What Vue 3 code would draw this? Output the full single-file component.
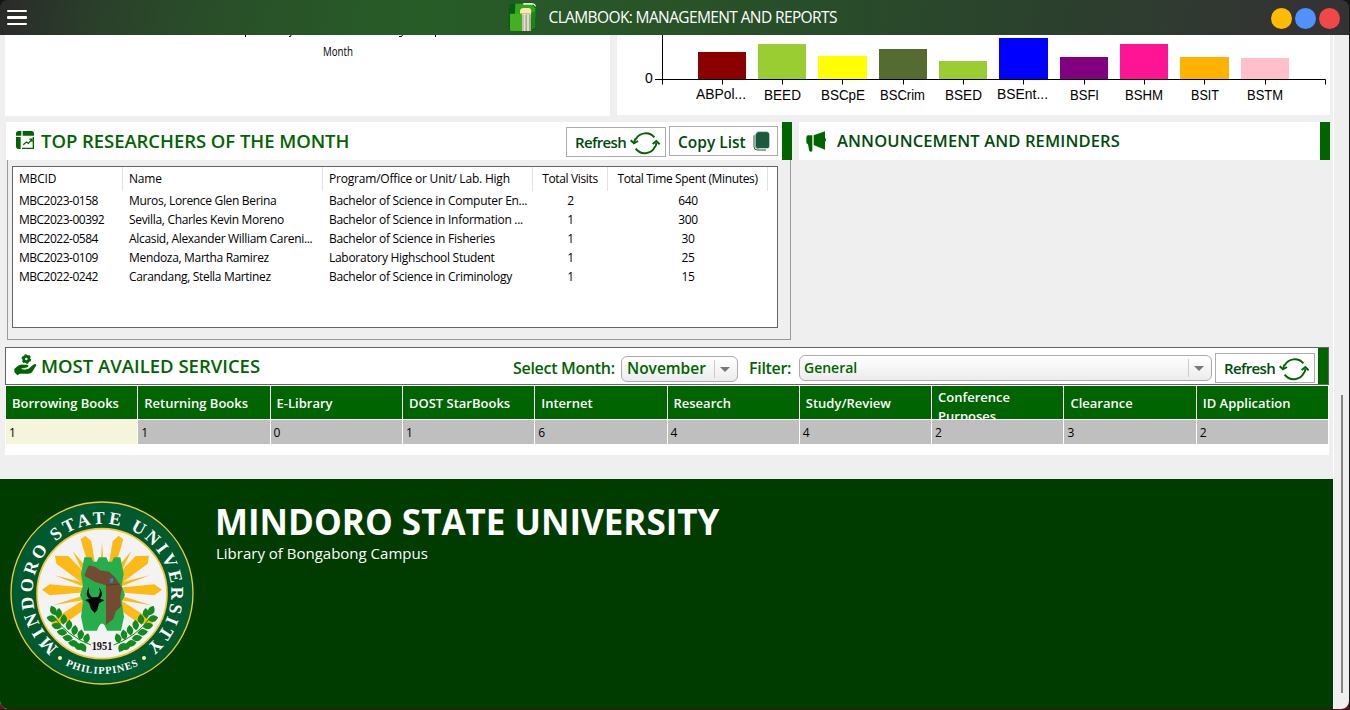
<script setup>
const bars = [
  { name: 'ABPol...', x: 698, w: 48, h: 27, fill: '#8b0000', lx: 696, lw: 50, ly: 99 },
  { name: 'BEED', x: 758, w: 48, h: 35, fill: '#9acd32', lx: 764, lw: 37, ly: 100 },
  { name: 'BSCpE', x: 818, w: 49, h: 23, fill: '#ffff00', lx: 821, lw: 44, ly: 100 },
  { name: 'BSCrim', x: 879, w: 48, h: 30, fill: '#556b2f', lx: 880, lw: 45, ly: 100 },
  { name: 'BSED', x: 939, w: 48, h: 18, fill: '#9acd32', lx: 945, lw: 37, ly: 100 },
  { name: 'BSEnt...', x: 999, w: 49, h: 41, fill: '#0000ff', lx: 997, lw: 51, ly: 99 },
  { name: 'BSFI', x: 1060, w: 48, h: 22, fill: '#800080', lx: 1070, lw: 29, ly: 100 },
  { name: 'BSHM', x: 1120, w: 48, h: 35, fill: '#ff1493', lx: 1125, lw: 38, ly: 100 },
  { name: 'BSIT', x: 1180, w: 49, h: 22, fill: '#ffb300', lx: 1191, lw: 28, ly: 100 },
  { name: 'BSTM', x: 1241, w: 48, h: 21, fill: '#ffc0cb', lx: 1247, lw: 36, ly: 100 },
]
const researchers = [
  ['MBC2023-0158', 'Muros, Lorence Glen Berina', 'Bachelor of Science in Computer En...', '2', '640'],
  ['MBC2023-00392', 'Sevilla, Charles Kevin Moreno', 'Bachelor of Science in Information ...', '1', '300'],
  ['MBC2022-0584', 'Alcasid, Alexander William Careni...', 'Bachelor of Science in Fisheries', '1', '30'],
  ['MBC2023-0109', 'Mendoza, Martha Ramirez', 'Laboratory Highschool Student', '1', '25'],
  ['MBC2022-0242', 'Carandang, Stella Martinez', 'Bachelor of Science in Criminology', '1', '15'],
]
const columns = ['MBCID', 'Name', 'Program/Office or Unit/ Lab. High', 'Total Visits', 'Total Time Spent (Minutes)']
const services = [
  ['Borrowing Books', 1], ['Returning Books', 1], ['E-Library', 0], ['DOST StarBooks', 1], ['Internet', 6],
  ['Research', 4], ['Study/Review', 4], ['Conference Purposes', 2], ['Clearance', 3], ['ID Application', 2],
]
const leaves = [
  [160, 362, 65], [155, 386, 15], [176, 370, 95], [170, 408, 10], [191, 388, 95],
  [186, 427, 8], [207, 405, 95], [203, 444, 8], [224, 421, 98], [220, 460, 8],
  [242, 434, 100], [236, 470, 20], [260, 445, 105], [249, 472, 60],
]
</script>

<template>
  <div class="window">
    <header class="titlebar">
      <div class="burger"><i></i><i></i><i></i></div>
      <div class="brand">
        <svg class="logo" viewBox="0 0 84 84">
          <path d="M8 2H76Q84 4 84 14V72Q84 80 76 80H10Q2 80 2 74V10Q2 3 8 2Z" fill="#0a5c14" />
          <path d="M22 2H70L82 16V44H20Z" fill="#31a81c" />
          <path d="M46 0H72Q84 2 84 12L76 5H46Z" fill="#e9f6e6" />
          <path d="M36 32V22Q38 15 47 15H64Q70 17 70 25V32Z" fill="#fbe7ad" />
          <path d="M6 34Q6 32 10 32H46V84H10Q6 84 6 78Z" fill="#43b022" />
          <path d="M42 84V34Q44 30 50 30H68V84Z" fill="#e8e8e8" />
          <path d="M45 36V84M56 34V84M64 34V84" stroke="#7b917e" stroke-width="2.500" />
          <path d="M41 32H66M52 36V84M68 34V84" stroke="#d8ad3c" stroke-width="2.500" />
          <path d="M70 26H82V72Q82 78 70 78Z" fill="#18861b" />
        </svg>
        <span class="brand-name">CLAMBOOK: MANAGEMENT AND REPORTS</span>
      </div>
      <div class="dots"><i class="min"></i><i class="max"></i><i class="close"></i></div>
    </header>

    <div class="body">
      <main class="content">
        <section class="charts">
          <div class="card visits">
            <svg width="605" height="81" viewBox="5 35 605 81">
              <path d="M245.500 35V37M289 36.500H290.500L291 35M399 36.500H401.500L402.500 35M435.500 35V37" stroke="#000" fill="none" />
              <text x="323" y="56" textLength="30" lengthAdjust="spacingAndGlyphs" class="axis-name">Month</text>
            </svg>
          </div>
          <div class="card programs">
            <svg width="713" height="80" viewBox="617 35 713 80">
              <rect v-for="b in bars" :key="b.name" :x="b.x" :y="79 - b.h" :width="b.w" :height="b.h" :fill="b.fill" />
              <path d="M662.500 35V84.500M655 79.500H1325.500V84.500" stroke="#000" fill="none" />
              <path v-for="b in bars" :key="b.name" :d="`M${b.x + 24.500} 79V84.500`" stroke="#000" />
              <text x="645" y="83" class="tick">0</text>
              <text v-for="b in bars" :key="b.name" :x="b.lx" :y="b.ly" :textLength="b.lw" lengthAdjust="spacingAndGlyphs" class="tick">{{ b.name }}</text>
            </svg>
          </div>
        </section>

        <section class="middle">
          <div class="researchers">
            <div class="head">
              <svg class="ico-board" width="18" height="18" viewBox="0 0 54 54">
                <path d="M8 0H16V14H0V8Q0 0 8 0ZM20 0H46Q54 0 54 8V14H20ZM0 18H14V54H8Q0 54 0 46Z" fill="#006400" />
                <path d="M52 18V52H18" fill="none" stroke="#006400" stroke-width="4" />
                <path d="M22 41L31 33L37 37L47 26M40 24.500H48V32" fill="none" stroke="#006400" stroke-width="4" />
              </svg>
              <h2 class="t-top">TOP RESEARCHERS OF THE MONTH</h2>
              <button class="btn refresh"><span>Refresh</span>
                <svg width="30" height="26" viewBox="0 0 90 78"><g fill="none" stroke="#006400" stroke-width="6">
                  <path d="M17 28A34 34 0 0 1 73 22M75 50A34 34 0 0 1 17 56M13 38Q13 31 17 26M79 38Q79 46 75 51" />
                  <path d="M2 31L12 40L24 33M68 42L79 33L89 43" /></g></svg>
              </button>
              <button class="btn copy"><span>Copy List</span>
                <svg width="17" height="20" viewBox="0 0 51 60">
                  <path d="M3 13V47Q3 57 13 57H39" fill="none" stroke="#1a5b3b" stroke-width="3" />
                  <path d="M7 10V42Q7 52 17 52" fill="none" stroke="#93ac9f" stroke-width="4" />
                  <rect x="9" y="3" width="40" height="49" rx="8" fill="#1a5b3b" />
                  <path d="M14 2H44" stroke="#8caa99" stroke-width="2" />
                </svg>
              </button>
              <i class="end"></i>
            </div>
            <div class="panel">
              <div class="list">
                <div class="row labels"><span v-for="c in columns" :key="c">{{ c }}</span></div>
                <div v-for="r in researchers" :key="r[0]" class="row entry"><span v-for="(c, i) in r" :key="i">{{ c }}</span></div>
              </div>
            </div>
          </div>
          <div class="announce">
            <div class="head">
              <svg class="ico-horn" width="21" height="21" viewBox="0 0 63 63">
                <path d="M7 13H19V61Q10 64 9 57L6 40Q1 39 1 33V20Q1 13 7 13ZM23 13L57 1V20Q63 26 57 33V56L23 42Z" fill="#006400" />
              </svg>
              <h2 class="t-ann">ANNOUNCEMENT AND REMINDERS</h2>
              <i class="end"></i>
            </div>
          </div>
        </section>

        <section class="services">
          <div class="bar">
            <svg class="ico-hand" width="23" height="22" viewBox="0 0 69 66">
              <circle cx="37" cy="15" r="8" fill="none" stroke="#006400" stroke-width="8" />
              <circle cx="37" cy="15" r="12.500" fill="none" stroke="#006400" stroke-width="4" stroke-dasharray="6.500 6.500" />
              <path d="M1 45Q16 30 28 32H39Q46 34 41 40L27 43Q33 46 43 44L57 33Q66 27 67 34L54 55Q50 59 43 59H17L10 64L1 54Z" fill="#006400" />
              <path d="M23 44Q34 48 44 42" fill="none" stroke="#fff" stroke-width="3" />
            </svg>
            <h2 class="t-srv">MOST AVAILED SERVICES</h2>
            <span class="lab month">Select Month:</span>
            <div class="select s-month"><span>November</span><b></b></div>
            <span class="lab filter">Filter:</span>
            <div class="select s-filter"><span>General</span><b></b></div>
            <button class="btn refresh"><span>Refresh</span>
              <svg width="30" height="26" viewBox="0 0 90 78"><g fill="none" stroke="#006400" stroke-width="6">
                <path d="M17 28A34 34 0 0 1 73 22M75 50A34 34 0 0 1 17 56M13 38Q13 31 17 26M79 38Q79 46 75 51" />
                <path d="M2 31L12 40L24 33M68 42L79 33L89 43" /></g></svg>
            </button>
            <i class="end"></i>
          </div>
          <div class="grid">
            <div v-for="s in services" :key="s[0]" class="th"><span>{{ s[0] }}</span></div>
            <div v-for="s in services" :key="s[0]" class="td">{{ s[1] }}</div>
          </div>
        </section>

        <footer class="footer">
          <svg class="seal" width="210" height="220" viewBox="0 0 630 660">
            <defs>
              <path id="arcTop" d="M 176 472 A 208 208 0 1 1 436 472" />
              <path id="arcBottom" d="M 150 495 A 243 243 0 0 0 462 495" />
            </defs>
            <circle cx="306" cy="309" r="273" fill="#005a2d" stroke="#f0ce28" stroke-width="4" />
            <circle cx="306" cy="311" r="195" fill="#f3f3f3" stroke="#f7c52c" stroke-width="5" />
            <g transform="translate(306 300)">
              <path d="M-64 -152L-50 -163L-32 -146L-21 -80L-42 -78ZM64 -152L50 -163L32 -146L21 -80L42 -78Z" fill="#fdb915" />
              <path d="M-141 -103L-101 -102L-55 -55V-18L-137 -79ZM141 -103L101 -102L55 -55V-18L137 -79Z" fill="#fdb915" />
              <path d="M-180 -1L-157 -17L-50 -7V7L-157 16ZM180 -1L157 -17L50 -7V7L157 16Z" fill="#fdb915" />
              <path d="M-55 30L-153 92L-149 110L-105 96L-55 60ZM55 30L153 92L149 110L105 96L55 60Z" fill="#fdb915" />
              <path d="M-4 -80L0 -145L4 -80ZM-88 -117L-50 -72L-62 -63ZM88 -117L50 -72L62 -63ZM-143 -44L-50 -21L-55 -10ZM143 -44L50 -21L55 -10ZM-148 46L-50 15L-52 30ZM148 46L50 15L52 30Z" fill="#fdb915" />
            </g>
            <path d="M253 202H274L280 215H290L297 202H319L325 215H336L342 202H361L371 252L365 287L375 315L365 335L372 380L363 422H321Q306 379 291 422H252L243 380L249 335L240 315L249 287L243 252Z" fill="#27ae4c" />
            <path d="M267 226L287 231L300 241L327 245L345 262L356 278L366 294L361 320L363 350L348 363L340 387L326 398L318 406V286L285 276L253 257L260 238Z" fill="#754a31" />
            <path d="M318 286L359 282" stroke="#4f3020" stroke-width="2" />
            <path d="M331 266L340 263L339 276L330 280Z" fill="#1297d4" />
            <path d="M267 291Q252 315 269 326L255 330L267 338L273 357L284 369L292 360L297 340L313 331L300 326Q313 310 297 292Q304 313 292 322H277Q264 315 267 291Z" fill="#000" />
            <g id="branch">
              <path d="M165 385Q205 440 273 465" fill="none" stroke="#128a1d" stroke-width="3" />
              <path v-for="(l, i) in leaves" :key="i" d="M-16 0Q0 -20 16 0Q0 20 -16 0Z" :transform="`translate(${l[0]} ${l[1]}) rotate(${l[2]})`" fill="#128a1d" />
            </g>
            <use href="#branch" transform="translate(614 0) scale(-1 1)" />
            <text x="275" y="480" textLength="62" lengthAdjust="spacingAndGlyphs" class="year">1951</text>
            <text class="ring"><textPath href="#arcTop" textLength="1022">MINDORO STATE UNIVERSITY</textPath></text>
            <text class="ring small"><textPath href="#arcBottom" startOffset="55" textLength="228">PHILIPPINES</textPath></text>
            <circle cx="180" cy="504" r="6" fill="#fff6a0" /><circle cx="432" cy="504" r="6" fill="#fff6a0" />
          </svg>
          <div class="school">
            <h1>MINDORO STATE UNIVERSITY</h1>
            <p>Library of Bongabong Campus</p>
          </div>
        </footer>
      </main>
      <aside class="scroll"><i></i></aside>
    </div>
    <div class="desk"></div>
  </div>
</template>

<style>
html, body { margin: 0; background: #1d1d1d; overflow: hidden; }
</style>

<style scoped>
* { box-sizing: border-box; }
.window { width: 1350px; height: 710px; display: flex; flex-direction: column; font-family: "Open Sans", "Noto Sans", sans-serif; color: #000; background: #151515; overflow: hidden; }
.titlebar { width: 1349px; height: 35px; flex: none; display: flex; align-items: center; justify-content: space-between; border-radius: 8px 8px 0 0; background: linear-gradient(100deg, #2a2a2a 0, #2a412a 8%, #295029 17%, #275c27 31%, #285527 47%, #284d29 60%, #2b422d 76%, #333 96%); }
.burger { width: 20px; margin-left: 7px; display: flex; flex-direction: column; gap: 4px; }
.burger i { height: 2.500px; background: #fff; border-radius: 1px; }
.brand { display: flex; align-items: center; margin-left: 48px; }
.logo { width: 28px; height: 28px; margin: -1px 13px 0 0; flex: none; }
.brand-name { width: 290px; font-size: 15.500px; line-height: 35px; color: #fff; white-space: nowrap; letter-spacing: -0.620px; }
.dots { display: flex; gap: 3px; margin-right: 9px; padding-top: 1px; }
.dots i { width: 21px; height: 21px; border-radius: 50%; }
.min { background: #fdbb05; } .max { background: #5090ff; } .close { background: #f04848; }
.body { height: 674px; display: flex; width: 1349px; background: #5a1622; }
.content { width: 1333px; display: flex; flex-direction: column; background: #efefef; border-radius: 0 0 0 8px; }
.scroll { width: 16px; background: #efefef; border-left: 1px solid #fff; display: flex; justify-content: center; border-radius: 0 0 8px 0; }
.scroll i { width: 2px; height: 298px; margin-top: 360px; background: #858585; }
.desk { height: 1px; background: #4c1018; }
.charts { display: flex; align-items: flex-start; gap: 7px; padding-left: 5px; height: 87px; }
.card { background: #fff; }
.visits { height: 81px; } .programs { height: 80px; }
.card svg { display: block; }
.axis-name { font-size: 12px; }
.tick { font: 14px "Liberation Sans", sans-serif; }
.middle { display: flex; gap: 7px; padding-left: 6px; height: 225px; }
.researchers { width: 786px; }
.announce { width: 531px; }
.head { height: 38px; display: flex; align-items: flex-start; background: #fff; }
.end { width: 10px; align-self: stretch; background: #006400; margin-left: auto; flex: none; }
h1, h2, p { margin: 0; white-space: nowrap; }
h2 { font-weight: 600; color: #006400; line-height: 38px; }
.ico-board { margin: 9px 0 0 10px; }
.t-top { font-size: 18.500px; width: 525px; margin-left: 7px; letter-spacing: -0.050px; }
.ico-horn { margin: 9px 0 0 7px; }
.t-ann { font-size: 16.500px; margin-left: 10px; color: #004b0b; letter-spacing: 0.130px; }
.btn { flex: none; height: 30px; border: 1px solid #adadad; background: #fff; display: flex; align-items: center; justify-content: flex-start; text-align: left; padding: 0; font-family: inherit; font-weight: 600; font-size: 15px; color: #004b0b; white-space: nowrap; }
.btn svg, .btn span { flex: none; }
.btn.refresh { width: 100px; margin-top: 5px; padding-left: 8px; }
.refresh span { width: 55px; letter-spacing: -0.650px; }
.refresh svg { margin-top: 2px; }
.btn.copy { width: 109px; margin: 4px 0 0 3px; padding-left: 8px; font-size: 15.500px; }
.copy span { width: 75px; padding-top: 1px; }
.panel { width: 784px; height: 180px; margin-left: 1px; border: 1px solid #999; border-top: 0; padding: 6px 0 0 4px; }
.list { width: 766px; height: 162px; border: 1px solid #646464; background: #fff; }
.row { display: grid; grid-template-columns: 110px 200px 210px 75px 160px; height: 19px; font-size: 12px; line-height: 19px; letter-spacing: -0.200px; white-space: nowrap; }
.row span { padding-left: 6px; overflow: hidden; }
.entry span:first-child { letter-spacing: -0.500px; }
.entry span:nth-child(2) { letter-spacing: -0.320px; }
.entry span:nth-child(3) { letter-spacing: -0.280px; }
.row span:nth-child(n+4) { text-align: center; padding-left: 0; letter-spacing: -0.350px; }
.labels { height: 24px; line-height: 24px; }
.labels span { border-right: 1px solid #e2e2e2; }
.services { margin-left: 5px; width: 1324px; height: 108px; background: #fff; }
.bar { width: 1324px; height: 38px; border: 1px solid #646464; display: flex; align-items: flex-start; }
.ico-hand { margin: 6px 0 0 8px; }
.t-srv { font-size: 18.500px; margin-left: 4px; width: 472px; }
.bar h2 { line-height: 36px; }
.lab { font-weight: 600; font-size: 16px; color: #006400; line-height: 40px; white-space: nowrap; letter-spacing: -0.300px; }
.month { width: 108px; }
.filter { width: 50px; margin-left: 11px; }
.select { flex: none; height: 26px; border: 1px solid #acacac; border-radius: 6px; background: linear-gradient(#fff, #ececec); display: flex; align-items: center; justify-content: space-between; font-weight: 600; color: #006400; }
.select b { width: 23px; height: 18px; border-left: 1px solid #ccc; display: flex; align-items: center; justify-content: center; padding-right: 2px; }
.select b::after { content: ""; border: 5px solid transparent; border-top-color: #777; border-bottom: 0; }
.select span { margin-top: -2px; }
.s-month { width: 117px; margin-top: 8px; font-size: 15.500px; padding-left: 5px; }
.s-filter { width: 413px; margin: 7px 3px 0 0; font-size: 14px; padding-left: 4px; }
.grid { display: grid; grid-template: 33px 24px / repeat(10, 1fr); gap: 1px; width: 1322px; margin: 1px 0 0 1px; }
.th { background: #006400; color: #fff; font-size: 13px; font-weight: 600; line-height: 19px; overflow: hidden; display: flex; padding: 8px 40px 0 6px; white-space: nowrap; }
.th:nth-child(8) { white-space: normal; padding-top: 2px; }
.td { background: #bfbfbf; font-size: 12px; line-height: 25px; padding-left: 3px; }
.td:nth-child(11) { background: #f5f5dc; }
.footer { margin-top: 24px; height: 230px; background: #003b00; display: flex; color: #fff; border-radius: 0 0 0 8px; }
.seal { margin-top: 11px; flex: none; }
.school { padding: 22px 0 0 6px; }
h1 { font-size: 35px; font-weight: 700; line-height: 42px; margin-left: -1px; }
p { font-size: 15px; line-height: 21px; }
.year { font: bold 38px "Liberation Serif", serif; fill: #111; }
.ring { font: bold 54px "Liberation Serif", serif; fill: #fff; }
.ring.small { font-size: 31px; }
</style>
